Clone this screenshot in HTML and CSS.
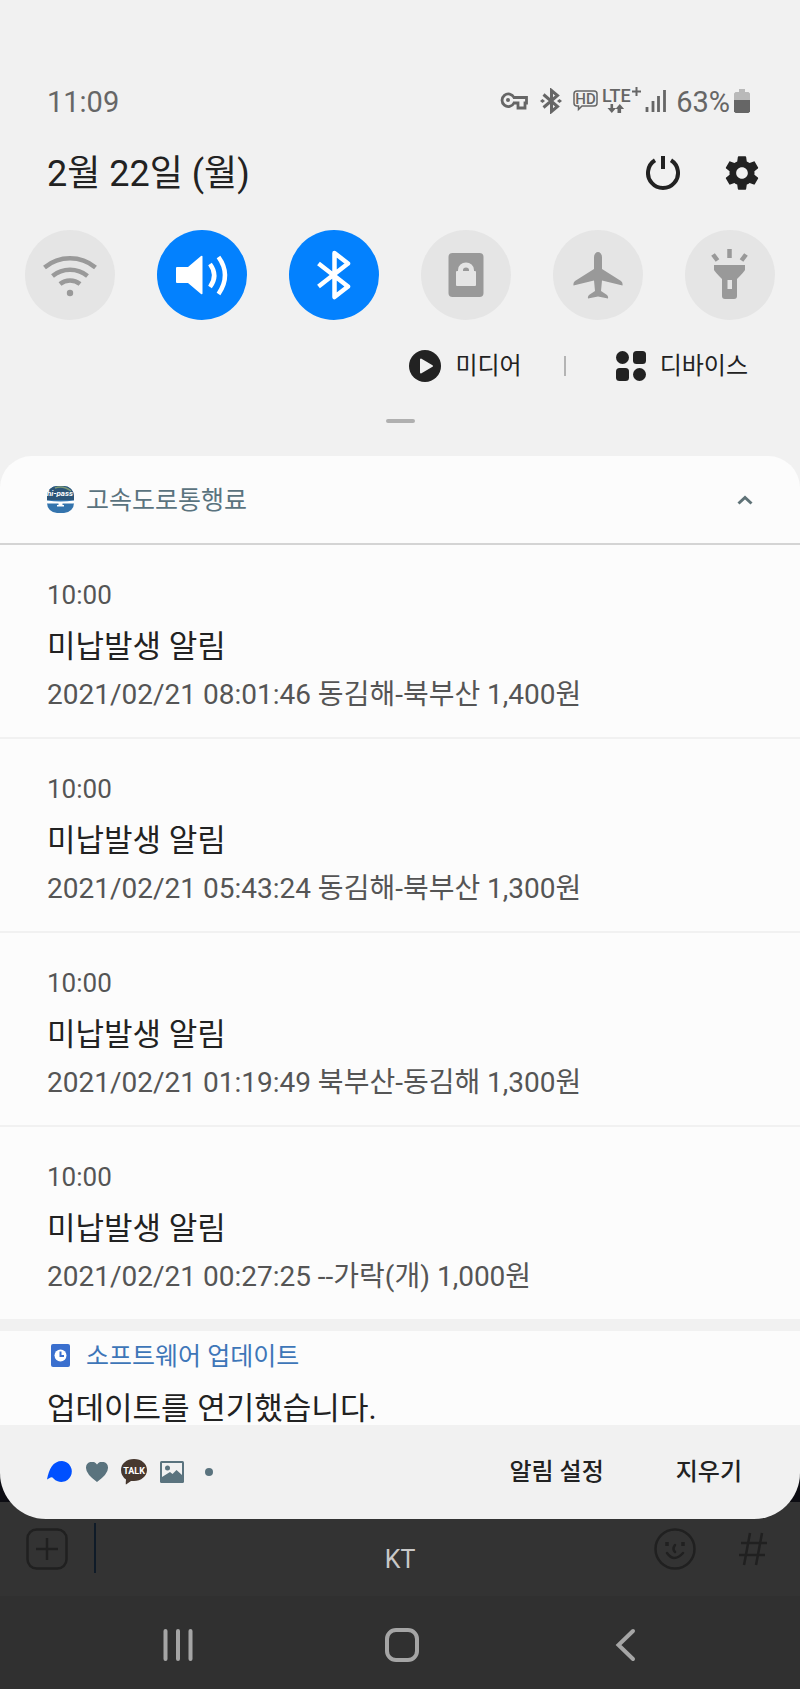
FILE: index.html
```html
<!DOCTYPE html>
<html lang="ko">
<head>
    <meta charset="UTF-8">
    <meta name="viewport" content="width=device-width, initial-scale=1.0">
    <title>알림</title>
    <link rel="stylesheet" href="styles.css">
</head>
<body>
    <div class="stage">
        <div class="shade">
            <header class="quick-panel">
                <div class="status-bar">
                    <span class="status-text">11:09</span>
                    <div class="status-icons">
                        <svg class="icon-key" width="28" height="18" viewBox="0 0 28 18" fill="none" stroke="#666" stroke-width="2.800">
                            <path d="M14 5.500H26.500V11H25v5h-7v-5h-4a6.300 6.300 0 1 1 0-5.500z"/>
                            <circle cx="8" cy="8" r="2" fill="#666" stroke="none"/>
                        </svg>
                        <svg class="icon-bt" width="22" height="26" viewBox="0 0 22 26" fill="none" stroke="#666" stroke-width="3">
                            <path d="M3.500 6.500 17.500 18.500 11.500 23.500V2.500l6 5L3.500 19.500"/>
                            <path d="M0 13l2.500-2 2.500 2-2.500 2zM17 13l2.500-2 2.500 2-2.500 2z" fill="#666" stroke="none"/>
                        </svg>
                        <svg class="icon-hd" width="27" height="24" viewBox="0 0 27 24">
                            <path d="M5 2h17q3 0 3 3v9q0 3-3 3H10l-3.500 3.500V17H5q-3 0-3-3V5q0-3 3-3z" fill="none" stroke="#666" stroke-width="1.500"/>
                            <text class="glyph-text" x="13.500" y="15" text-anchor="middle" font-size="15" font-weight="500">HD</text>
                        </svg>
                        <svg class="icon-lte" width="40" height="34" viewBox="0 -3 40 34">
                            <text class="glyph-text" x="0" y="15" font-size="18" font-weight="500">LTE</text>
                            <path d="M34.500 0v9M30 4.500h9" stroke="#666" stroke-width="2"/>
                            <path d="M8.500 17v4H5.500l4.300 5 4.300-5h-3v-4zM15.500 26v-4h-2l4.300-5 4.300 5h-3v4z" fill="#666"/>
                        </svg>
                        <svg class="icon-signal" width="21" height="24" viewBox="0 0 21 24" stroke="#666" stroke-width="2.800">
                            <path d="M2 23v-5M8 23V12M13.500 23V7M19.500 23V1"/>
                        </svg>
                        <span class="status-text">63%</span>
                        <svg class="icon-battery" width="16" height="26" viewBox="0 0 16 26">
                            <path d="M5 1h6v3h3.500L16 5.500V13H0V5.500L1.500 4H5z" fill="#b9b9b9"/>
                            <path d="M0 12h16v11.500L14.500 25h-13L0 23.500z" fill="#666"/>
                        </svg>
                    </div>
                </div>

                <div class="date-row">
                    <h1 class="date">2월 22일 (월)</h1>
                    <div class="panel-actions">
                        <button type="button" class="icon-button" aria-label="전원">
                            <svg width="34" height="34" viewBox="0 0 34 34" fill="none" stroke="#222" stroke-width="4">
                                <path d="M9 4.300a15 15 0 1 0 16 0"/>
                                <path d="M17 0v13"/>
                            </svg>
                        </button>
                        <button type="button" class="icon-button" aria-label="설정">
                            <svg width="40" height="40" viewBox="0 0 24 24" fill="#222">
                                <path d="M19.430 12.980c.040-.320.070-.640.070-.980s-.030-.660-.070-.980l2.110-1.650c.190-.150.240-.420.120-.640l-2-3.460c-.120-.220-.390-.300-.610-.220l-2.490 1c-.520-.400-1.080-.730-1.690-.980l-.380-2.650C14.460 2.180 14.250 2 14 2h-4c-.250 0-.460.180-.490.420l-.380 2.650c-.610.250-1.170.590-1.690.980l-2.490-1c-.230-.090-.490 0-.610.220l-2 3.460c-.130.220-.070.490.120.640l2.110 1.650c-.040.320-.070.650-.070.980s.030.660.070.980l-2.110 1.650c-.190.150-.240.420-.120.640l2 3.460c.120.220.390.300.610.220l2.490-1c.520.400 1.080.730 1.690.980l.380 2.650c.030.240.240.420.490.420h4c.250 0 .460-.180.490-.420l.380-2.650c.610-.250 1.170-.590 1.690-.980l2.490 1c.230.090.490 0 .610-.220l2-3.460c.120-.220.070-.490-.120-.640l-2.110-1.650zM12 15.500c-1.930 0-3.500-1.570-3.500-3.500s1.570-3.500 3.500-3.500 3.500 1.570 3.500 3.500-1.570 3.500-3.500 3.500z"/>
                            </svg>
                        </button>
                    </div>
                </div>

                <div class="tiles">
                    <button type="button" class="tile" aria-label="와이파이">
                        <svg width="90" height="90" viewBox="0 0 90 90" fill="none" stroke="#999" stroke-width="4.500">
                            <path d="M19.500 37.500a40 40 0 0 1 51 0M27.500 46a28 28 0 0 1 35 0M35 54a16 16 0 0 1 20 0"/>
                            <circle cx="45" cy="63" r="3.200" fill="#999" stroke="none"/>
                        </svg>
                    </button>
                    <button type="button" class="tile tile-on" aria-label="소리">
                        <svg width="90" height="90" viewBox="0 0 90 90" fill="none" stroke="#fff" stroke-width="4.500">
                            <path d="M20 37h11l13-11q1.500-.800 1.500.500v37q0 1.300-1.500.500L31 53H20q-1 0-1-1V38q0-1 1-1z" fill="#fff" stroke="none"/>
                            <path d="M53 34q8.500 11.500 0 23M61.500 27q13 18 0 37"/>
                        </svg>
                    </button>
                    <button type="button" class="tile tile-on" aria-label="블루투스">
                        <svg width="90" height="90" viewBox="0 0 90 90" fill="none" stroke="#fff" stroke-width="4.500" stroke-linejoin="round">
                            <path d="M29.500 33.500l29.500 23L45.500 67V23l13.500 10.500-29.500 23"/>
                        </svg>
                    </button>
                    <button type="button" class="tile" aria-label="화면 잠금">
                        <svg width="90" height="90" viewBox="0 0 90 90">
                            <rect x="27.500" y="23" width="35" height="44" rx="4" fill="#999"/>
                            <rect x="35" y="41" width="20" height="15" rx="1" fill="#e5e5e5"/>
                            <path d="M39.500 42v-2a5.500 5 0 0 1 11 0v2" fill="none" stroke="#e5e5e5" stroke-width="5"/>
                        </svg>
                    </button>
                    <button type="button" class="tile" aria-label="비행기 탑승 모드">
                        <svg width="90" height="90" viewBox="0 0 90 90" fill="#999">
                            <path d="M45 22c2.500 0 4 2.500 4 5.500V39L68 51q2 1.500 1.500 4.500L49 50.500 48 61l6 4q1.500 1.500 1 3.500L45 66.500l-10 2q-.500-2 1-3.500l6-4L41 50.500 20.500 55.500Q20 52.500 22 51l19-12V27.500c0-3 1.500-5.500 4-5.500z"/>
                        </svg>
                    </button>
                    <button type="button" class="tile" aria-label="손전등">
                        <svg width="90" height="90" viewBox="0 0 90 90">
                            <path d="M29 35h31v5q-1 2-8 9v17q0 3-3 3h-9q-3 0-3-3V49q-7-7-8-9z" fill="#999"/>
                            <path d="M44.500 19v9M28 24.500l4.500 6M61 24.500l-4.500 6" stroke="#999" stroke-width="4.500"/>
                            <path d="M42.500 50h4.500v9h-4.500z" fill="#e5e5e5"/>
                        </svg>
                    </button>
                </div>

                <div class="shortcuts">
                    <button type="button" class="shortcut">
                        <svg width="32" height="32" viewBox="0 0 32 32">
                            <circle cx="16" cy="16" r="16" fill="#222"/>
                            <path d="M12 9.500v13L23 16z" fill="#f1f1f1" stroke="#f1f1f1" stroke-width="2" stroke-linejoin="round"/>
                        </svg>
                        미디어
                    </button>
                    <span class="shortcut-divider"></span>
                    <button type="button" class="shortcut">
                        <svg width="30" height="30" viewBox="0 0 30 30" fill="#222">
                            <circle cx="6.500" cy="6.500" r="6.500"/>
                            <rect x="17" y="0" width="13" height="13" rx="3.500"/>
                            <rect x="0" y="17" width="13" height="13" rx="3.500"/>
                            <circle cx="23.500" cy="23.500" r="6.500"/>
                        </svg>
                        디바이스
                    </button>
                </div>
                <div class="handle"></div>
            </header>

            <main>
                <section class="group">
                    <div class="group-header">
                        <svg width="27" height="27" viewBox="0 0 27 27">
                            <defs>
                                <clipPath id="badge"><rect width="27" height="27" rx="10"/></clipPath>
                            </defs>
                            <g clip-path="url(#badge)">
                                <rect width="27" height="27" fill="#3474ad"/>
                                <rect width="27" height="14" fill="#2c5578"/>
                                <path d="M8 2q8-3 16 3" fill="none" stroke="#7d9a78" stroke-width="1.500"/>
                                <path d="M0 14.500q13.500 2 27 0v3H15.500v1.500H17v1.500h-7V19h1.500v-1.500H0z" fill="#fff"/>
                            </g>
                            <text class="hipass-text" x="13" y="10" text-anchor="middle">hi-pass</text>
                        </svg>
                        <h2 class="app-name">고속도로통행료</h2>
                        <button type="button" class="icon-button collapse" aria-label="접기">
                            <svg width="16" height="10" viewBox="0 0 16 10" fill="none" stroke="#5f7277" stroke-width="3">
                                <path d="M1.500 8.500 8 2.500l6.500 6"/>
                            </svg>
                        </button>
                    </div>

                    <article class="notice">
                        <time class="notice-time">10:00</time>
                        <h3 class="notice-title">미납발생 알림</h3>
                        <p class="notice-text">2021/02/21 08:01:46 동김해-북부산 1,400원</p>
                    </article>
                    <article class="notice">
                        <time class="notice-time">10:00</time>
                        <h3 class="notice-title">미납발생 알림</h3>
                        <p class="notice-text">2021/02/21 05:43:24 동김해-북부산 1,300원</p>
                    </article>
                    <article class="notice">
                        <time class="notice-time">10:00</time>
                        <h3 class="notice-title">미납발생 알림</h3>
                        <p class="notice-text">2021/02/21 01:19:49 북부산-동김해 1,300원</p>
                    </article>
                    <article class="notice">
                        <time class="notice-time">10:00</time>
                        <h3 class="notice-title">미납발생 알림</h3>
                        <p class="notice-text">2021/02/21 00:27:25 --가락(개) 1,000원</p>
                    </article>
                </section>

                <section class="update">
                    <div class="update-header">
                        <svg width="27" height="24" viewBox="0 0 27 24">
                            <rect x="4" y="0" width="19" height="23" rx="2" fill="#3a6fce"/>
                            <circle cx="13.500" cy="11.500" r="6" fill="#fff"/>
                            <path d="M13.500 7.500v4.500H17" fill="none" stroke="#3a6fce" stroke-width="2"/>
                        </svg>
                        <h2 class="app-name">소프트웨어 업데이트</h2>
                    </div>
                    <p class="update-title">업데이트를 연기했습니다.</p>
                </section>
            </main>

            <footer class="shade-footer">
                <div class="more-icons">
                    <svg width="26" height="22" viewBox="0 0 26 22">
                        <path d="M15 0a10.500 10.500 0 1 1-8.500 17.500Q5 15.500 3.500 16.500L0 18.500C2 8 6 0 15 0z" fill="#0050ff"/>
                    </svg>
                    <svg width="22" height="20" viewBox="0 0 22 20">
                        <path d="M11 20Q0 12 0 6a6 6 0 0 1 11-3.500A6 6 0 0 1 22 6q0 6-11 14z" fill="#5a737e"/>
                    </svg>
                    <svg width="26" height="26" viewBox="0 0 26 26">
                        <path d="M13 0c7.500 0 13 4.700 13 11s-6 11-13 11q-2 0-3 0l-5 3.500q-.500 0 0-5Q0 17 0 11C0 4.700 5.500 0 13 0z" fill="#47382f"/>
                        <text class="talk-text" x="13" y="15" text-anchor="middle">TALK</text>
                    </svg>
                    <svg width="24" height="22" viewBox="0 0 24 22">
                        <rect width="24" height="22" rx="1.500" fill="#5a737e"/>
                        <path d="M2 2h20v12l-5.500-5-4 4-2.500-2-8 5z" fill="#f1f1f1"/>
                        <circle cx="7.500" cy="7" r="2.500" fill="#5a737e"/>
                    </svg>
                    <span class="more-dot"></span>
                </div>
                <div class="footer-buttons">
                    <button type="button" class="text-button">알림 설정</button>
                    <button type="button" class="text-button">지우기</button>
                </div>
            </footer>
        </div>
    </div>

    <!-- dimmed chat input behind the shade -->
    <div class="chat-bar">
        <button type="button" class="icon-button" aria-label="추가">
            <svg width="42" height="42" viewBox="0 0 42 42" fill="none" stroke="#202020" stroke-width="2.500">
                <rect x="1.500" y="1.500" width="39" height="39" rx="9"/>
                <path d="M21 10v22M10 21h22"/>
            </svg>
        </button>
        <input type="text" class="chat-input" aria-label="메시지">
        <button type="button" class="icon-button" aria-label="이모티콘">
            <svg width="42" height="42" viewBox="0 0 42 42" fill="none" stroke="#202020" stroke-width="2.500">
                <circle cx="21" cy="21" r="19.500"/>
                <path d="M21 17q-3 4 0 7M13 25q7 10 16 0" stroke-linecap="round"/>
                <path d="M13 14v4M29 14v4" stroke-width="3.500"/>
            </svg>
        </button>
        <button type="button" class="icon-button hash" aria-label="샵검색">
            <svg width="30" height="34" viewBox="0 0 30 34" fill="none" stroke="#202020" stroke-width="2.500">
                <path d="M12 1 6 33M24 1l-6 32M3 11h26M1 23h26"/>
            </svg>
        </button>
        <span class="carrier">KT</span>
    </div>

    <nav class="nav-bar">
        <button type="button" class="nav-button" aria-label="최근 앱">
            <svg width="34" height="34" viewBox="0 0 34 34" stroke="#a5a5a5" stroke-width="4" stroke-linecap="round">
                <path d="M4.500 3v28M17 3v28M29.500 3v28"/>
            </svg>
        </button>
        <button type="button" class="nav-button" aria-label="홈">
            <svg width="34" height="34" viewBox="0 0 34 34" fill="none" stroke="#a5a5a5" stroke-width="4">
                <rect x="2" y="2" width="30" height="30" rx="9"/>
            </svg>
        </button>
        <button type="button" class="nav-button" aria-label="뒤로">
            <svg width="34" height="34" viewBox="0 0 34 34" fill="none" stroke="#a5a5a5" stroke-width="4" stroke-linecap="round">
                <path d="M24 3 9.500 17 24 31"/>
            </svg>
        </button>
    </nav>
</body>
</html>
```

FILE: styles.css
```css
* {
    box-sizing: border-box;
}

body {
    margin: 0;
    font-family: Roboto, "Noto Sans CJK KR", sans-serif;
    background-color: #303030;
    color: #222;
}

h1, h2, h3, p {
    margin: 0;
    font-weight: 400;
}

svg {
    display: block;
    flex: none;
}

button {
    padding: 0;
    border: none;
    background: none;
    color: inherit;
    font-family: inherit;
    cursor: pointer;
}

.stage {
    background: linear-gradient(to top, #333 17px, #0d0d13 17px);
}

.shade {
    background-color: #f1f1f1;
    border-radius: 0 0 46px 46px;
    overflow: hidden;
}

/* quick panel */
.quick-panel {
    padding: 84px 0 33px;
}

.status-bar {
    display: flex;
    justify-content: space-between;
    align-items: center;
    height: 34px;
    padding: 0 50px 0 47px;
    color: #666;
}

.status-text {
    padding-top: 2px;
    font-size: 29px;
    line-height: 34px;
}

.status-icons {
    display: flex;
    align-items: center;
}

.icon-bt {
    margin-left: 12px;
}

.icon-hd {
    margin-left: 10px;
}

.icon-lte {
    margin: 0 3px;
}

.icon-signal {
    margin-right: 10px;
}

.icon-battery {
    margin-left: 4px;
}

.glyph-text {
    font-family: Roboto, sans-serif;
    fill: #666;
}

.date-row {
    display: flex;
    justify-content: space-between;
    align-items: center;
    margin-top: 32px;
    padding: 0 38px 0 47px;
}

.date {
    padding-top: 2px;
    font-size: 36px;
    line-height: 44px;
}

.panel-actions {
    display: flex;
    align-items: center;
    gap: 42px;
}

.tiles {
    display: flex;
    justify-content: space-between;
    margin-top: 34px;
    padding: 0 25px;
}

.tile {
    width: 90px;
    height: 90px;
    border-radius: 50%;
    background-color: #e5e5e5;
}

.tile-on {
    background-color: #0381fe;
}

.shortcuts {
    display: flex;
    justify-content: flex-end;
    align-items: center;
    height: 36px;
    margin-top: 28px;
    padding-right: 52px;
}

.shortcut {
    display: flex;
    align-items: center;
    gap: 14px;
    font-size: 24px;
    line-height: 38px;
}

.shortcut-divider {
    width: 2px;
    height: 20px;
    margin: 0 50px 0 42px;
    background-color: #b4b4b4;
}

.handle {
    width: 29px;
    height: 4px;
    margin: 35px auto 0;
    border-radius: 2px;
    background-color: #b0b0b0;
}

/* notifications */
.group {
    background-color: #fcfcfc;
    border-radius: 32px 32px 0 0;
}

.group-header {
    display: flex;
    align-items: center;
    gap: 12px;
    height: 89px;
    padding: 0 47px;
    border-bottom: 2px solid #d4d4d4;
    color: #5a737e;
}

.app-name {
    padding-top: 2px;
    font-size: 25px;
    line-height: 36px;
}

.collapse {
    margin-left: auto;
}

.notice {
    padding: 34px 47px 24px;
    border-bottom: 2px solid #f1f1f1;
}

.notice:last-child {
    border-bottom: none;
}

.notice-time {
    display: block;
    color: #555;
    font-size: 26px;
    line-height: 32px;
}

.notice-title {
    margin-top: 16px;
    font-size: 31px;
    line-height: 40px;
}

.notice-text {
    margin-top: 10px;
    color: #555;
    font-size: 28px;
    line-height: 36px;
}

.update {
    margin-top: 12px;
    padding: 6px 47px 0;
    background-color: #fcfcfc;
}

.update-header {
    display: flex;
    align-items: center;
    gap: 12px;
    color: #3e76b8;
}

.update-title {
    margin-top: 18px;
    font-size: 31px;
    line-height: 32px;
}

.shade-footer {
    display: flex;
    justify-content: space-between;
    align-items: center;
    height: 94px;
    padding: 0 58px 0 47px;
}

.more-icons {
    display: flex;
    align-items: center;
    gap: 13px;
}

.more-dot {
    width: 8px;
    height: 8px;
    margin-left: 8px;
    border-radius: 50%;
    background-color: #5a737e;
}

.hipass-text {
    font: italic 700 8px Roboto, sans-serif;
    fill: #fff;
}

.talk-text {
    font: 700 9px Roboto, sans-serif;
    fill: #fff;
}

.footer-buttons {
    display: flex;
    gap: 72px;
}

.text-button {
    font-size: 24px;
    font-weight: 500;
    line-height: 38px;
}

/* screen behind the shade */
.chat-bar {
    position: relative;
    display: flex;
    align-items: flex-start;
    height: 77px;
    padding: 9px 32px 0 26px;
    background-color: #333;
}

.chat-input {
    flex: 1;
    min-width: 0;
    height: 50px;
    margin: -5px 0 0 26px;
    border: none;
    border-left: 2px solid #0f1b28;
    background: none;
}

.hash {
    margin: 4px 0 0 42px;
}

.carrier {
    position: absolute;
    top: 25px;
    left: 50%;
    transform: translateX(-50%);
    color: #c8c8c8;
    font-size: 25px;
    line-height: 32px;
}

.nav-bar {
    display: flex;
    height: 93px;
    padding: 4px 62px 0 66px;
    background-color: #303030;
}

.nav-button {
    display: flex;
    flex: 1;
    justify-content: center;
    align-items: center;
}
```
